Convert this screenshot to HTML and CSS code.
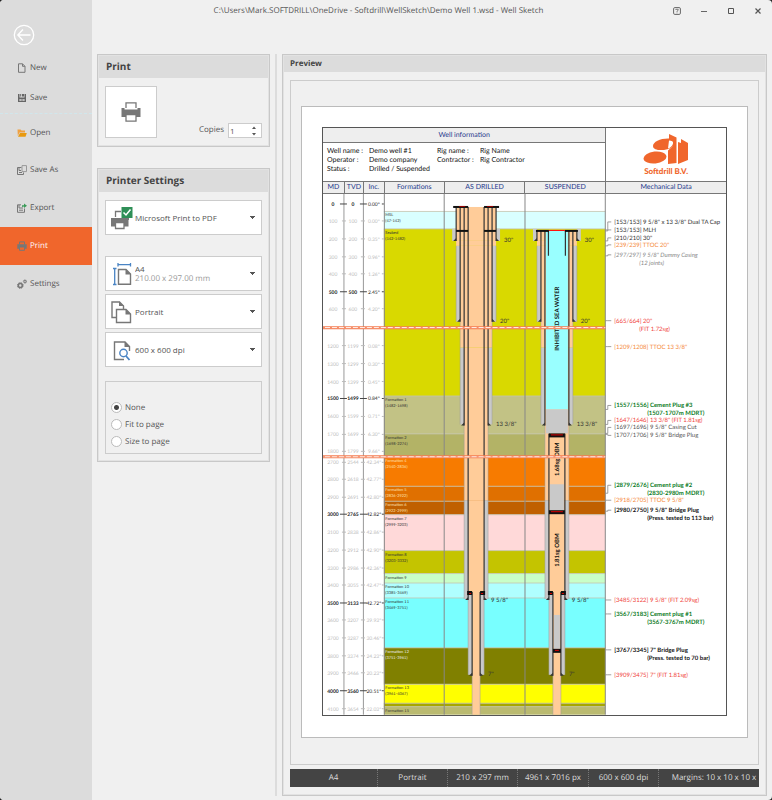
FILE: index.html
```
<!DOCTYPE html>
<html lang="en">

<head>
  <meta charset="UTF-8">
  <meta name="viewport" content="width=device-width, initial-scale=1.0">
  <title>Well Sketch</title>
  <link rel="stylesheet" href="styles.css">
</head>

<body>
  <div class="window">
    <nav class="sidebar">
      <button class="back" aria-label="Back">
        <svg width="22" height="22" viewBox="0 0 22 22" fill="none" stroke="#fff" stroke-width="1.3">
          <circle cx="11" cy="11" r="9.7" />
          <path d="M17.500 11H5M10 5.500L4.800 11l5.200 5.500" />
        </svg>
      </button>
      <a class="item" href="#new">
        <svg width="10" height="10" viewBox="0 0 10 10" fill="none" stroke="#777" stroke-width="1"><path d="M1.500 .8h4l2.500 2.500v6H1.500zM5.500 .8v2.500H8" /></svg>
        New
      </a>
      <a class="item save" href="#save">
        <svg width="10" height="10" viewBox="0 0 10 10"><path d="M1 1h1.500v3.500h5V1H9v8H1z" fill="#666" /><path d="M3.200 1h1v2.500h-1zM5 1h2v2.500H5z" fill="#666" /><path d="M2.500 6h5v2h-5z" fill="#dcdcdc" /><path d="M3.500 6.600h3v.8h-3z" fill="#666" /></svg>
        Save
      </a>
      <a class="item open" href="#open">
        <svg width="10" height="10" viewBox="0 0 10 10"><path d="M.5 1.500h3l1 1H8v2H2.500L.8 8z" fill="#f0a040" /><path d="M3 5h6.800L8.500 8.800H1z" fill="#e89a10" /></svg>
        Open
      </a>
      <a class="item tall" href="#saveas">
        <svg width="10" height="10" viewBox="0 0 10 10" fill="none" stroke="#777" stroke-width="1"><path d="M4.500 2.500H.5v7h6V7.500M2 2.500v3h2M2 7.500h3" /><path d="M5 .6h4.500v6H5z" stroke="#999" /></svg>
        Save As
      </a>
      <a class="item tall" href="#export">
        <svg width="10" height="10" viewBox="0 0 10 10" fill="none"><path d="M4 1.800H.5v7.500h7V5.500M2 2v3h4M2 7.200h4" stroke="#777" /><path d="M5 4V2.200h2V.5l3 2.300L7 5V3.500z" fill="#3a9a58" /></svg>
        Export
      </a>
      <a class="item tall active" href="#print">
        <svg width="10" height="10" viewBox="0 0 10 10"><path d="M2.500 3.500V.9h5v2.600" fill="none" stroke="#777" /><path d="M.3 3.300h9.400v4.400H.3z" fill="#777" /><path d="M2.500 6h5v3.300h-5z" fill="#f0662c" stroke="#777" /></svg>
        Print
      </a>
      <a class="item tall" href="#settings">
        <svg width="10" height="10" viewBox="0 0 10 10" fill="none" stroke="#777"><circle cx="3.300" cy="6.500" r="2" stroke-width="1.600" /><circle cx="3.300" cy="6.500" r="2.900" stroke-dasharray="1.200 1.080" /><circle cx="8" cy="2.500" r="1.100" stroke-width="1" /><circle cx="8" cy="2.500" r="1.800" stroke-width=".7" stroke-dasharray=".8 .6" /></svg>
        Settings
      </a>
    </nav>

    <div class="main">
      <header class="titlebar">
        <h1>C:\Users\Mark.SOFTDRILL\OneDrive - Softdrill\WellSketch\Demo Well 1.wsd - Well Sketch</h1>
        <div class="controls">
          <button aria-label="Help"><svg width="8" height="8" viewBox="0 0 8 8" fill="none" stroke="#666"><rect x=".6" y=".6" width="6.800" height="6.800" rx="1.200" /><path d="M2.800 3V2.300h2.400v1L4 4.200v.8M4 5.500v.8" stroke-width=".8" /></svg></button>
          <button aria-label="Minimize"><svg width="8" height="8" viewBox="0 0 8 8" stroke="#666"><path d="M1 4.500h6" /></svg></button>
          <button aria-label="Maximize"><svg width="8" height="8" viewBox="0 0 8 8" fill="none" stroke="#555"><path d="M1.500 1.500h5v5h-5z" /></svg></button>
          <button aria-label="Close"><svg width="8" height="8" viewBox="0 0 8 8" stroke="#555" stroke-width="1.200"><path d="M1.500 1.500l5 5M6.500 1.500l-5 5" /></svg></button>
        </div>
      </header>

      <div class="columns">
        <div class="options">
          <section class="panel">
            <h2>Print</h2>
            <div class="print-row">
              <button class="print-btn" aria-label="Print">
                <svg width="20" height="20" viewBox="0 0 20 20"><path d="M5 6V.9h10V6" fill="#fff" stroke="#777" stroke-width="1.300" /><path d="M.5 6h3v1.500h13V6h3v9h-19z" fill="#777" /><path d="M5 12.500h10v6.700H5z" fill="#fff" stroke="#777" stroke-width="1.300" /></svg>
              </button>
              <label for="copies">Copies</label>
              <span class="spin">
                <input id="copies" type="text" value="1">
                <svg width="6" height="10" viewBox="0 0 6 10" fill="#555"><path d="M1 3l2-2.500L5 3zM1 7l2 2.500L5 7z" /></svg>
              </span>
            </div>
          </section>

          <section class="panel">
            <h2>Printer Settings</h2>
            <div class="settings">
              <div class="combo printer">
                <svg width="24" height="24" viewBox="0 0 24 24"><path d="M5.500 11V5.500H11" fill="none" stroke="#777" stroke-width="1.300" /><path d="M1 12h17.500v8.500H1z" fill="#777" /><path d="M1 12h2.500v1.500H16V12h3v2" fill="#777" /><path d="M5.500 16.700h8.500v5.800H5.500z" fill="#fff" stroke="#777" stroke-width="1.300" /><path d="M11.500 1h11v11h-11z" fill="#2f8f57" /><path d="M13.500 6.500l2.500 2.500 4.500-5.500" fill="none" stroke="#fff" stroke-width="1.500" /></svg>
                <select aria-label="Printer"><option>Microsoft Print to PDF</option></select>
              </div>
              <div class="combo two">
                <svg width="24" height="24" viewBox="0 0 24 24" fill="none"><path d="M8 1v3.500M20.500 1v3.500M8 2.700h12.500M3 6.500h3.500M3 22.500h3.500M4.700 6.500v16" stroke="#4a84c4" stroke-width="1.300" /><path d="M8.500 7.500H16l4.500 4.500v10.300h-12z" stroke="#777" stroke-width="1.400" /><path d="M15.500 7v5.500H21z" fill="#777" /></svg>
                <select aria-label="Paper size"><option>A4</option></select>
                <small>210.00 x 297.00 mm</small>
              </div>
              <div class="combo">
                <svg width="24" height="24" viewBox="0 0 24 24" fill="#fff"><path d="M2 2h7.500l4 4v11.500H2z" stroke="#777" stroke-width="1.400" /><path d="M9 1.500V6h5z" fill="#777" /><path d="M6.500 9.500H16l4.500 4.500v8.500h-14z" stroke="#777" stroke-width="1.400" /><path d="M15.500 9v5.500H21z" fill="#777" /></svg>
                <select aria-label="Orientation"><option>Portrait</option></select>
              </div>
              <div class="combo">
                <svg width="24" height="24" viewBox="0 0 24 24" fill="none"><path d="M14 21.500H4.500V4H15l4.500 4.500V13" stroke="#777" stroke-width="1.400" /><path d="M14.500 3.500V9H20z" fill="#777" /><circle cx="13.500" cy="15" r="3.700" stroke="#4a84c4" stroke-width="1.400" /><path d="M16 18l3.500 4" stroke="#4a84c4" stroke-width="1.800" /></svg>
                <select aria-label="Resolution"><option>600 x 600 dpi</option></select>
              </div>
              <div class="scaling">
                <label><input type="radio" name="scaling" checked>None</label>
                <label><input type="radio" name="scaling">Fit to page</label>
                <label><input type="radio" name="scaling">Size to page</label>
              </div>
            </div>
          </section>
        </div>

        <section class="panel preview">
          <h2>Preview</h2>
          <div class="canvas">
            <div class="sheet">
              <div class="report">
                <div class="well">
                  <h3>Well information</h3>
                  <dl>
                    <dt>Well name :</dt><dd>Demo well #1</dd>
                    <dt>Rig name :</dt><dd>Rig Name</dd>
                    <dt>Operator :</dt><dd>Demo company</dd>
                    <dt>Contractor :</dt><dd>Rig Contractor</dd>
                    <dt>Status :</dt><dd>Drilled / Suspended</dd>
                  </dl>
                </div>
                <div class="logo">
                  <svg width="46" height="31" viewBox="0 0 46 31" fill="#f0662c"><path fill-rule="evenodd" d="M25 4.500C17 4.500 10 8 10 12c0 3.500 5 4.500 11 4C27 15.300 32 12 32 8.500c0-2.500-3-4-7-4zM26 6.500c3 0 4.500 1 4 3-.5 2.500-2.500 4-5 5z" /><path d="M26 0l7.500 3.500V29l-8.500 1V16.500l5-4.500V7L26 5.500z" /><path d="M35 14V8l3 1V5l7 4v17l-10 4z" /><ellipse cx="12" cy="23.500" rx="11.500" ry="6" transform="rotate(-6 12 23.500)" /></svg>
                  <span>Softdrill B.V.</span>
                </div>
                <div class="heads">
                  <span>MD</span><span>TVD</span><span>Inc.</span><span>Formations</span><span>AS DRILLED</span><span>SUSPENDED</span><span>Mechanical Data</span>
                </div>
                <svg class="chart" id="chart" viewBox="322 194 404 522"></svg>
              </div>
            </div>
          </div>
          <footer class="status">
            <span>A4</span><span>Portrait</span><span>210 x 297 mm</span><span>4961 x 7016 px</span><span>600 x 600 dpi</span><span>Margins: 10 x 10 x 10 x</span>
          </footer>
        </section>
      </div>
    </div>
  </div>
  <script src="chart.js"></script>
</body>

</html>
```

FILE: styles.css
```
* {
  box-sizing: border-box;
}

html {
  background: #222;
}

body {
  margin: 0;
  font: 8px/12px "Open Sans", "Noto Sans", sans-serif;
  text-rendering: geometricPrecision;
  color: #555;
}

h1, h2, h3, dl, dd {
  margin: 0;
  font: inherit;
}

button {
  padding: 0;
  border: 0;
  background: none;
}

svg {
  display: block;
}

.window {
  display: flex;
  min-height: 100vh;
  border-radius: 4px;
  overflow: hidden;
  background: #f0f0f0;
}

/* sidebar */
.sidebar {
  flex: none;
  width: 92px;
  padding-top: 24px;
  background: #dcdcdc;
}

.back {
  display: block;
  margin: 0 0 6px 13px;
}

.item {
  display: flex;
  align-items: center;
  gap: 3px;
  height: 31px;
  padding-left: 17px;
  color: #555;
  text-decoration: none;
}

.save {
  border-bottom: 1px dashed #d0e6ec;
}

.open {
  height: 37px;
}

.tall {
  height: 38px;
}

.active {
  background: #f0662c;
  color: #fff;
}

/* title bar */
.main {
  flex: 1;
  min-width: 0;
  display: flex;
  flex-direction: column;
}

.titlebar {
  display: flex;
  align-items: center;
  height: 22px;
  margin-bottom: 32px;
  padding-right: 10px;
}

.titlebar h1 {
  flex: 1;
  padding-right: 8px;
  text-align: center;
}

.controls {
  display: flex;
  gap: 19px;
}

.columns {
  flex: 1;
  display: flex;
  gap: 5px;
  padding: 0 5px 4px 5px;
}

/* panels */
.options {
  flex: none;
  width: 180px;
  padding-right: 5px;
  border-right: 2px solid #dcdcdc;
}

.panel {
  border: 1px solid #c8c8c8;
  outline: 1px solid #e2e2e2;
  outline-offset: -2px;
  margin-bottom: 21px;
}

.panel h2 {
  padding: 0 8px;
  background: #dcdcdc;
  font-size: 10px;
  font-weight: bold;
  line-height: 23px;
  color: #444;
}

.print-row {
  display: flex;
  align-items: flex-end;
  padding: 8px 7px;
}

.print-btn {
  display: grid;
  place-items: center;
  width: 52px;
  height: 52px;
  margin-right: auto;
  border: 1px solid #ccc;
  background: #fff;
}

.print-row label {
  padding: 0 4px 2px 0;
}

.spin {
  display: flex;
  align-items: center;
  width: 34px;
  height: 15px;
  padding-right: 4px;
  border: 1px solid #ccc;
  background: #fff;
}

.spin input {
  flex: 1;
  min-width: 0;
  padding: 0 1px;
  border: 0;
  background: none;
  font: inherit;
  color: inherit;
}

.settings {
  padding: 8px 7px 7px;
}

.combo {
  display: grid;
  align-items: center;
  height: 35px;
  margin-bottom: 3px;
  border: 1px solid #ccc;
  background: #fff;
}

.combo svg,
.combo select,
.combo small {
  grid-area: 1 / 1;
}

.combo svg {
  margin-left: 4px;
  z-index: 1;
  pointer-events: none;
}

.printer {
  margin-bottom: 21px;
}

.combo select {
  appearance: none;
  width: 100%;
  height: 100%;
  padding: 0 20px 0 29px;
  border: 0;
  background: linear-gradient(#555, #555) no-repeat right 6px top 15px / 5px 1px, linear-gradient(#555, #555) no-repeat right 7px top 16px / 3px 1px, linear-gradient(#555, #555) no-repeat right 8px top 17px / 1px 1px;
  font: inherit;
  color: inherit;
}

.combo.two select {
  padding-bottom: 10px;
}

.combo small {
  align-self: end;
  padding: 0 0 5px 29px;
  font-size: 8px;
  color: #999;
  pointer-events: none;
}

.scaling {
  margin-top: 14px;
  padding: 17px 5px 3px;
  border: 1px solid #ccc;
}

.scaling label {
  display: flex;
  align-items: center;
  gap: 3px;
  height: 17px;
}

.scaling input {
  appearance: none;
  width: 11px;
  height: 11px;
  margin: 0;
  border: 1px solid #bbb;
  border-radius: 50%;
  background: #fff;
}

.scaling input:checked {
  background: radial-gradient(#444 2px, #fff 3px);
}

/* preview */
.preview {
  flex: 1;
  min-width: 0;
  display: flex;
  flex-direction: column;
  margin: 0;
  padding-bottom: 8px;
}

.preview h2 {
  padding: 0 7px;
  font-size: 8px;
  line-height: 17px;
}

.canvas {
  flex: 1;
  margin: 8px 7px 4px;
  padding: 25px 10px;
  border: 1px solid #ccc;
}

.sheet {
  padding: 20px 20px 21px;
  border: 1px solid #bbb;
  background: #fff;
}

.report {
  display: grid;
  grid-template-columns: 283fr 121fr;
  border: 1px solid #555;
  font: 7px/9px Lato, "Open Sans", sans-serif;
  color: #111;
}

.well h3 {
  border-bottom: 1px solid #777;
  background: #eee;
  line-height: 14px;
  text-align: center;
  color: #24388c;
}

.well dl {
  display: grid;
  grid-template-columns: 42px 68px 43px 1fr;
  padding: 4px 0 7px 4px;
}

.logo {
  display: flex;
  flex-direction: column;
  align-items: center;
  padding-top: 6px;
  border-left: 1px solid #777;
  font-size: 8px;
  font-weight: 900;
  color: #f0662c;
}

.logo span {
  margin-top: 2px;
}

.heads {
  grid-column: 1 / 3;
  display: grid;
  grid-template-columns: 21fr 19fr 21fr 60fr 81fr 81fr 121fr;
  border: 1px solid #777;
  border-width: 1px 0;
  background: #eee;
  line-height: 11px;
  text-align: center;
  color: #24388c;
}

.heads span + span {
  border-left: 1px solid #777;
}

.chart {
  grid-column: 1 / 3;
  width: 100%;
  height: auto;
}

.chart text {
  font-size: 5px;
}

.chart .tiny {
  font-size: 4px;
}

.chart .note {
  font-size: 6px;
}

.status {
  display: grid;
  grid-template-columns: 87fr 70fr 70fr 71fr 70fr 101fr;
  margin: 0 7px;
  background: #444;
  line-height: 18px;
  text-align: center;
  color: #ddd;
}

.status span {
  white-space: nowrap;
}

.status span + span {
  border-left: 1px dotted #777;
}

.status span:last-child {
  padding-left: 10px;
}
```

FILE: chart.js
```
const chart = document.getElementById('chart');
const STEEL = '#333', CEMENT = '#c9c9c9', MUD = '#ffcc99', WATER = '#99ffff';

function add(tag, attrs, text) {
  const el = document.createElementNS('http://www.w3.org/2000/svg', tag);
  for (const key in attrs) el.setAttribute(key, attrs[key]);
  if (text) el.textContent = text;
  chart.appendChild(el);
}

function box(x1, y1, x2, y2, fill) {
  add('rect', { x: x1, y: y1, width: x2 - x1, height: y2 - y1, fill });
}

function line(d, stroke, width) {
  add('path', { d, stroke, 'stroke-width': width || 1, fill: 'none' });
}

function label(x, y, text, fill, more) {
  add('text', { x, y, fill, ...more }, text);
}

// top, bottom, colour, name, interval, text colour
const formations = [
  [211.5, 229, '#d9ffff', 'MSL', '(47-142)', '#333'],
  [229, 396.5, '#d9d900', 'Seabed', '(142-1482)', '#333'],
  [396.5, 434.5, '#c2c285', 'Formation 1', '(1482-1698)', '#333'],
  [434.5, 458, '#b3b366', 'Formation 2', '(1698-2274)', '#333'],
  [458, 487, '#f77b00', 'Formation 4', '(2540-2836)', '#ffe0b0'],
  [487, 502, '#e07000', 'Formation 5', '(2836-2922)', '#ffe0b0'],
  [502, 515.5, '#c06000', 'Formation 6', '(2922-2999)', '#ffe0b0'],
  [515.5, 551.5, '#ffd9d9', 'Formation 7', '(2999-3203)', '#333'],
  [551.5, 574.5, '#c4c400', 'Formation 8', '(3203-3332)', '#333'],
  [574.5, 584, '#c8ffc8', 'Formation 9', '', '#333'],
  [584, 599, '#b0ffff', 'Formation 10', '(3385-3469)', '#333'],
  [599, 649, '#78ffff', 'Formation 11', '(3469-3751)', '#333'],
  [649, 685.5, '#808000', 'Formation 12', '(3751-3961)', '#eee'],
  [685.5, 704.5, '#ffff00', 'Formation 13', '(3961-4067)', '#333'],
  [704.5, 708, '#a6a600', '', '', '#333'],
  [708, 716, '#baba70', 'Formation 15', '', '#333']
];
formations.forEach(([top, bottom, fill, name, range, ink]) => {
  box(383, top, 605, bottom, fill);
  line(`M383 ${top}H605`, '#c4c4b0', 0.8);
  label(384.5, top + 5, name, ink, { class: 'tiny' });
  label(384.5, top + 11, range, ink, { class: 'tiny' });
});

// y, MD, TVD, inclination
const depths = [
  [204, 0, 0, '0.00°'], [221, 100, 100, '0.00°'], [239, 200, 200, '0.35°'],
  [257, 300, 300, '0.96°'], [274, 400, 400, '1.26°'], [292, 500, 500, '2.45°'],
  [309, 600, 600, '4.20°'], [346, 1200, 1199, '0.08°'], [364, 1300, 1299, '0.30°'],
  [382, 1400, 1399, '0.45°'], [399, 1500, 1499, '0.84°'], [417, 1600, 1599, '0.71°'],
  [435, 1700, 1699, '6.30°'], [452, 1800, 1799, '9.66°'], [463, 2700, 2544, '42.34°'],
  [480, 2800, 2618, '42.77°'], [498, 2900, 2691, '42.80°'], [515, 3000, 2765, '42.82°'],
  [533, 3100, 2838, '42.86°'], [551, 3200, 2912, '42.90°'], [569, 3300, 2986, '42.36°'],
  [586, 3400, 3055, '42.47°'], [604, 3500, 3133, '42.72°'], [621, 3600, 3207, '39.93°'],
  [639, 3700, 3287, '30.46°'], [657, 3800, 3374, '24.23°'], [674, 3900, 3466, '20.23°'],
  [692, 4000, 3560, '20.51°'], [710, 4100, 3654, '22.03°']
];
[343, 362.5].forEach(x => line(`M${x} 194V716`, '#999'));
[383.5, 443.5, 524.5, 605].forEach(x => line(`M${x} 194V716`, '#888'));
depths.forEach(([y, md, tvd, inc]) => {
  const major = md % 500 === 0;
  const ink = major ? '#222' : '#bbb';
  const style = { 'text-anchor': 'middle', 'font-weight': major ? 'bold' : 'normal' };
  label(332, y + 2, String(md), ink, style);
  label(352, y + 2, String(tvd), ink, style);
  label(373, y + 2, inc, ink, { 'text-anchor': 'middle' });
  line(major ? `M339 ${y}H346M359 ${y}H366M381 ${y}H383` : `M341 ${y}H345M360 ${y}H364M381 ${y}H383`, major ? '#444' : '#bbb');
});

// both sides of the well, between two distances from its axis
function sides(cx, inner, outer, top, bottom, fill) {
  box(cx - outer, top, cx - inner, bottom, fill);
  box(cx + inner, top, cx + outer, bottom, fill);
}

function casing(cx, r, top, bottom, name) {
  line(`M${cx - r} ${top}V${bottom}M${cx + r} ${top}V${bottom}`, STEEL, 1.2);
  add('path', { d: `M${cx - r} ${bottom - 3}v3h-3zM${cx + r} ${bottom - 3}v3h3z`, fill: STEEL });
  if (name) label(cx + r + 8, bottom + 1, name, '#333', { class: 'note' });
}

function well(cx, head, cut) {
  box(cx - 20, head, cx + 20, 241, MUD);
  box(cx - 20, 241, cx + 20, 246, MUD);
  box(cx - 16, 246, cx + 16, 348, MUD);
  box(cx - 12, 348, cx + 12, 501, MUD);
  box(cx - 8, 501, cx + 8, 597, MUD);
  box(cx - 4, 597, cx + 4, 716, MUD);
  sides(cx, 20, 24, 229, 241, CEMENT);
  sides(cx, 16, 20, 246, 322, CEMENT);
  sides(cx, 12, 16, 348, 425, CEMENT);
  sides(cx, 8, 12, 501, 600, CEMENT);
  sides(cx, 4, 8, 596, 676, CEMENT);
  line(`M${cx - 20} 246V322M${cx + 20} 246V322M${cx - 16} 322V425M${cx + 16} 322V425M${cx - 12} 425V600M${cx + 12} 425V600M${cx - 8} 600V676M${cx + 8} 600V676M${cx - 4} 676V716M${cx + 4} 676V716`, '#999', 0.5);
  casing(cx, 20, head, 241, '30"');
  casing(cx, 16, head, 322);
  casing(cx, 12, head, 426);
  casing(cx, 8, cut, 601);
  casing(cx, 4, 593, 677);
  label(cx + 24, 323, '20"', '#333', { class: 'note' });
  label(cx + 20, 427, '13 3/8"', '#333', { class: 'note' });
  label(cx + 15, 603, '9 5/8"', '#333', { class: 'note' });
  label(cx + 12, 677, '7"', '#333', { class: 'note' });
  sides(cx, 4, 9, 592, 596, '#111');
  sides(cx, 5, 7, 594, 595, '#d00');
}

function plug(cx, r, y) {
  box(cx - r, y, cx + r, y + 4, '#111');
  box(cx - r + 2, y + 1, cx + r - 2, y + 2, '#d00');
}

const drilled = 475.5, suspended = 556.5;
well(drilled, 207, 207);
sides(drilled, 8, 23, 206, 208, '#111');
sides(drilled, 11, 17, 206, 207, '#900');
sides(drilled, 8, 20, 230, 232, '#111');

well(suspended, 230, 434);
box(suspended - 11, 231, suspended + 11, 410, WATER);
box(suspended - 11, 410, suspended + 11, 434, CEMENT);
line('M548 231V256M565 231V256', STEEL, 1.2);
sides(suspended, 8, 21, 230, 232, '#111');
box(suspended - 8, 230, suspended + 8, 231, '#f00');
plug(suspended, 8, 434);
box(suspended - 7, 485, suspended + 7, 511, CEMENT);
plug(suspended, 8, 511);
box(suspended - 3, 616, suspended + 3, 650, CEMENT);
plug(suspended, 4, 650);

[['INHIBITED SEA WATER', 319], ['1.68sg OBM', 460], ['1.81sg OBM', 551]].forEach(([text, y]) => {
  label(0, 0, text, '#111', { class: 'note', 'font-weight': 'bold', 'text-anchor': 'middle', transform: `translate(558.5 ${y}) rotate(-90)` });
});

// breaks in the depth scale
[328, 457.5].forEach(y => {
  line(`M322 ${y}H605`, '#f47b50', 3);
  line(`M322 ${y}H605`, '#fff', 1);
  add('path', { d: `M322 ${y}H605`, stroke: '#f47b50', 'stroke-dasharray': '2 5' });
});

// text y, pick-up y on the well, colour, depth, text, second line, weight
const items = [
  [222, 230, '#333', '[153/153]', '9 5/8" x 13 3/8" Dual TA Cap'],
  [230, 231, '#333', '[153/153]', 'MLH'],
  [238, 241, '#333', '[210/210]', '30"'],
  [245, 246, '#f58a3c', '[239/239]', 'TTOC 20"'],
  [255, 256, '#888', '[297/297]', '9 5/8" Dummy Casing', '(12 joints)', 'italic'],
  [321, 321, '#f0443c', '[665/664]', '20"', '(FIT 1.72sg)'],
  [347, 347, '#f58a3c', '[1209/1208]', 'TTOC 13 3/8"'],
  [406, 410, '#0a7a1e', '[1557/1556]', 'Cement Plug #3', '(1507-1707m MDRT)', 'bold'],
  [421, 425, '#f0443c', '[1647/1646]', '13 3/8" (FIT 1.81sg)'],
  [428, 434, '#555', '[1697/1696]', '9 5/8" Casing Cut'],
  [436, 435, '#555', '[1707/1706]', '9 5/8" Bridge Plug'],
  [486, 494, '#0a7a1e', '[2879/2676]', 'Cement plug #2', '(2830-2980m MDRT)', 'bold'],
  [501, 501, '#f58a3c', '[2918/2705]', 'TTOC 9 5/8"'],
  [511, 512, '#111', '[2980/2750]', '9 5/8" Bridge Plug', '(Press. tested to 113 bar)', 'bold'],
  [601, 601, '#f0443c', '[3485/3122]', '9 5/8" (FIT 2.09sg)'],
  [615, 615, '#0a7a1e', '[3567/3183]', 'Cement plug #1', '(3567-3767m MDRT)', 'bold'],
  [651, 651, '#111', '[3767/3345]', '7" Bridge Plug', '(Press. tested to 70 bar)', 'bold'],
  [676, 676, '#f0443c', '[3909/3475]', '7" (FIT 1.81sg)']
];
items.forEach(([y, from, fill, depth, text, second, look]) => {
  const style = { class: 'note' };
  if (look === 'bold') style['font-weight'] = 'bold';
  if (look === 'italic') style['font-style'] = 'italic';
  line(`M605 ${from}H607.5V${y}H611`, '#888', 0.8);
  label(614, y + 2, `${depth} ${text}`, fill, style);
  if (second) label(look === 'bold' ? 647 : 639, y + 10, second, fill, style);
});
```
